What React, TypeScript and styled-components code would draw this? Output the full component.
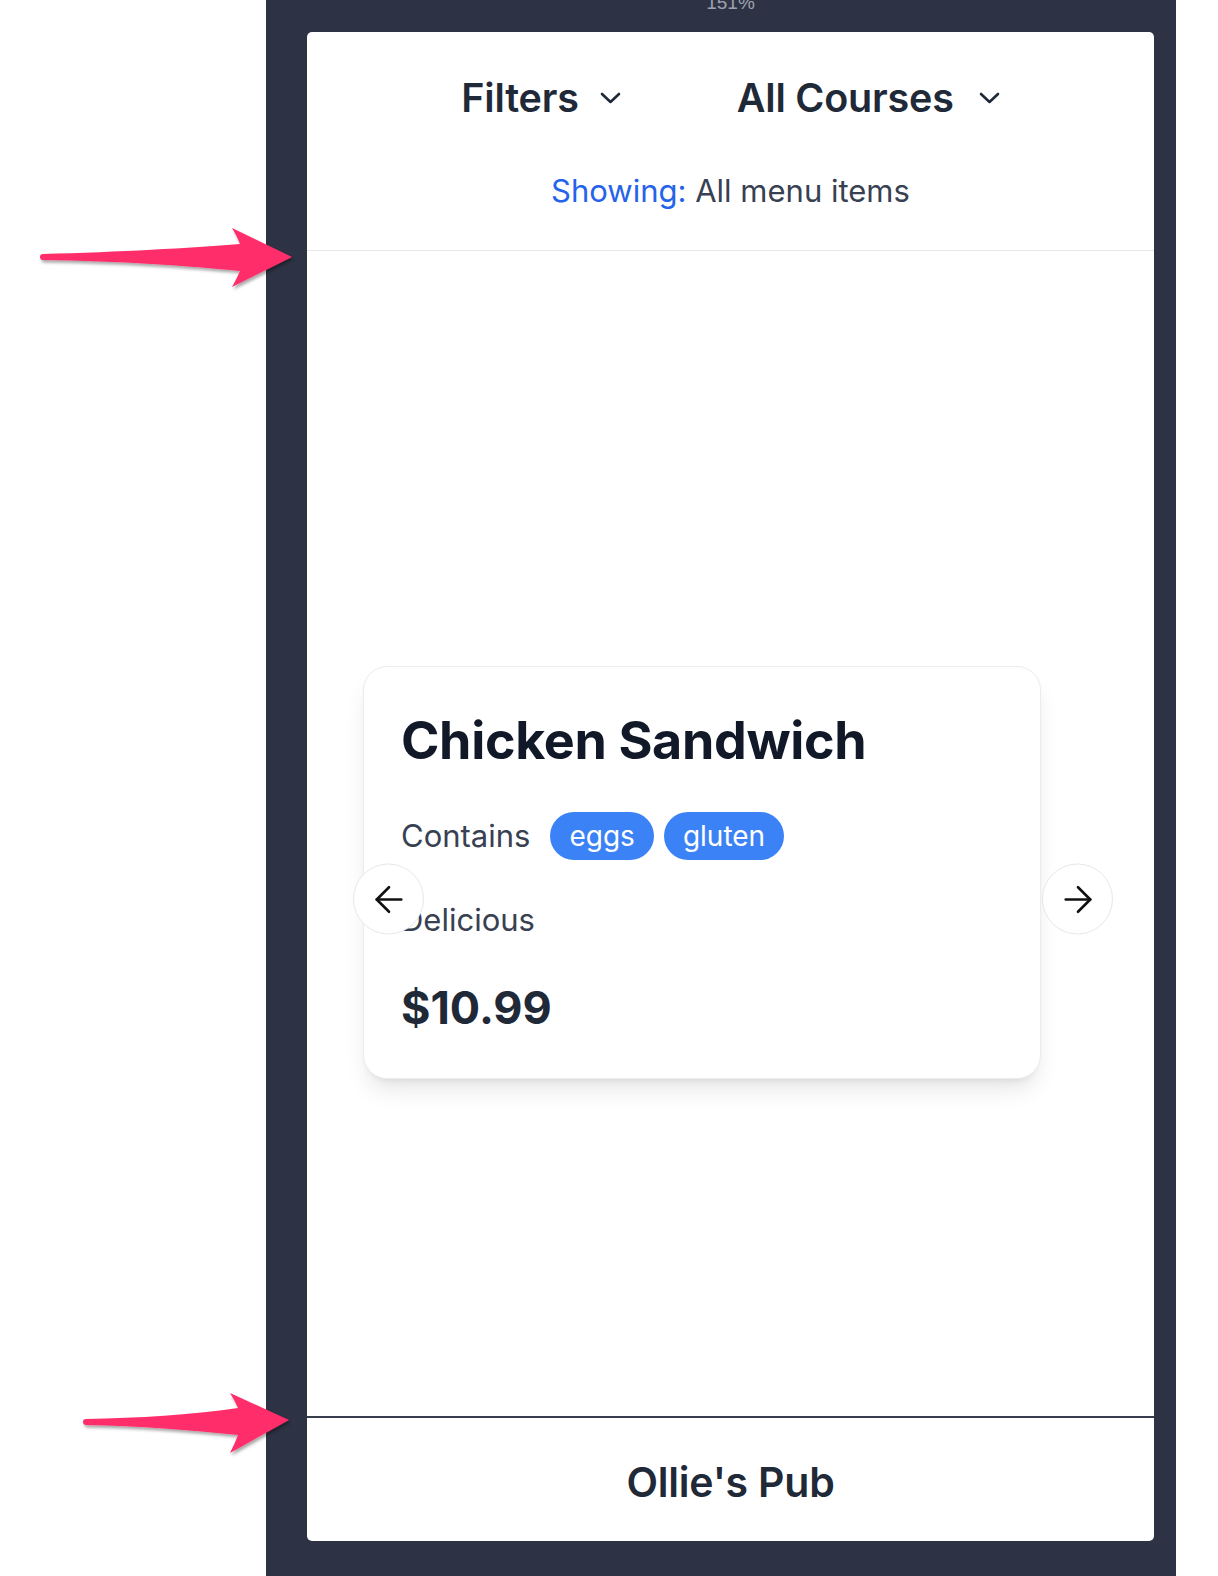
import React from "react";
import styled, { createGlobalStyle } from "styled-components";
import { ArrowLeft, ArrowRight } from "lucide-react";

const GlobalStyle = createGlobalStyle`
  html, body { margin: 0; padding: 0; background: #ffffff; }
  body { font-family: Inter, "Noto Sans", sans-serif; -webkit-font-smoothing: antialiased; }
  * { box-sizing: border-box; }
`;

const Page = styled.div`
  position: relative;
  width: 1218px;
  height: 1576px;
  overflow: hidden;
  display: flex;
  padding-left: 266px;
  background: #ffffff;
`;

const Frame = styled.div`
  width: 910px;
  height: 100%;
  background: #2d3244;
  display: flex;
  flex-direction: column;
  padding: 0 22px 35px 41px;
`;

const ZoomLabel = styled.div`
  margin-top: -8px;
  margin-bottom: 18px;
  height: 22px;
  line-height: 22px;
  font-family: "Liberation Sans", Arial, sans-serif;
  font-size: 19px;
  color: #9da2b0;
  text-align: center;
`;

const Panel = styled.div`
  flex: 1;
  background: #ffffff;
  border-radius: 5px;
  display: flex;
  flex-direction: column;
  overflow: hidden;
`;

const Header = styled.header`
  flex: none;
  height: 219px;
  padding-top: 43px;
  display: flex;
  flex-direction: column;
  align-items: center;
  border-bottom: 1px solid #e5e7eb;
`;

const HeaderRow = styled.div`
  display: flex;
  align-items: center;
  gap: 116px;
  height: 46px;
`;

const Dropdown = styled.button<{ $gap: number }>`
  display: flex;
  align-items: center;
  gap: ${(p) => p.$gap}px;
  padding: 0;
  border: none;
  background: none;
  font-family: inherit;
  font-size: 39.5px;
  line-height: 46px;
  font-weight: 600;
  color: #1f2937;
  letter-spacing: -0.2px;
`;

const ShowingLine = styled.div`
  margin-top: 51px;
  font-size: 31px;
  line-height: 38px;
  color: #374151;
`;

const ShowingLabel = styled.span`
  color: #2563eb;
`;

const Main = styled.main`
  flex: 1;
  display: flex;
  flex-direction: column;
  padding-top: 415px;
`;

const Carousel = styled.div`
  position: relative;
  margin: 0 41px 0 46px;
  padding: 0 0 53px 10px;
`;

const Card = styled.article`
  width: 678px;
  border: 1px solid #ececee;
  border-radius: 24px;
  background: #ffffff;
  box-shadow: 0 15px 23px -5px rgba(0, 0, 0, 0.1), 0 6px 9px -6px rgba(0, 0, 0, 0.1);
  padding: 44px 37px 43px;
  display: flex;
  flex-direction: column;
`;

const Title = styled.h2`
  margin: 0;
  font-size: 52px;
  line-height: 60px;
  font-weight: 700;
  color: #111827;
  letter-spacing: -0.35px;
`;

const TagRow = styled.div`
  margin-top: 41px;
  display: flex;
  align-items: center;
  gap: 10px;
  height: 48px;
`;

const ContainsLabel = styled.span`
  font-size: 31px;
  line-height: 40px;
  color: #374151;
  margin-right: 10px;
`;

const Tag = styled.span`
  height: 48px;
  padding: 0 19px;
  border-radius: 24px;
  background: #3b82f6;
  color: #ffffff;
  font-size: 28px;
  line-height: 48px;
`;

const Description = styled.p`
  margin: 40px 0 0;
  font-size: 31px;
  line-height: 40px;
  color: #374151;
`;

const Price = styled.div`
  margin-top: 41px;
  font-size: 45px;
  line-height: 54px;
  font-weight: 700;
  color: #1f2937;
`;

const NavButton = styled.button<{ $side: "left" | "right" }>`
  position: absolute;
  top: 50%;
  ${(p) => p.$side}: 0;
  transform: translateY(-50%);
  width: 71px;
  height: 71px;
  border-radius: 50%;
  border: 1px solid #e5e7eb;
  background: #ffffff;
  display: flex;
  align-items: center;
  justify-content: center;
  padding: 0;
  color: #111111;
`;

const Footer = styled.footer`
  flex: none;
  height: 125px;
  border-top: 2px solid #373d4d;
  padding-top: 5px;
  display: flex;
  align-items: center;
  justify-content: center;
  font-size: 41px;
  font-weight: 600;
  color: #1f2937;
  letter-spacing: -0.2px;
`;

const Annotation = styled.svg<{ $top: number }>`
  position: absolute;
  left: 0;
  top: ${(p) => p.$top}px;
  overflow: visible;
`;

const Chevron = () => (
  <svg width="21" height="12" viewBox="0 0 21 12" fill="none">
    <path d="M2 2 L10.5 10 L19 2" stroke="#1f2937" strokeWidth="2.6" strokeLinecap="round" strokeLinejoin="round" />
  </svg>
);

const PinkArrow = ({ top, d, id }: { top: number; d: string; id: string }) => (
  <Annotation $top={top} width="310" height="90" viewBox="0 0 310 90">
    <defs>
      <filter id={id} x="-10%" y="-30%" width="120%" height="160%">
        <feDropShadow dx="1.5" dy="2.5" stdDeviation="1.6" floodColor="#000" floodOpacity="0.35" />
      </filter>
    </defs>
    <path d={d} fill="#ff2d6b" filter={`url(#${id})`} />
  </Annotation>
);

export default function App() {
  return (
    <>
      <GlobalStyle />
      <Page>
        <Frame>
          <ZoomLabel>151%</ZoomLabel>
          <Panel>
            <Header>
              <HeaderRow>
                <Dropdown $gap={21}>
                  Filters
                  <Chevron />
                </Dropdown>
                <Dropdown $gap={25}>
                  All Courses
                  <Chevron />
                </Dropdown>
              </HeaderRow>
              <ShowingLine>
                <ShowingLabel>Showing:</ShowingLabel> All menu items
              </ShowingLine>
            </Header>
            <Main>
              <Carousel>
                <Card>
                  <Title>Chicken Sandwich</Title>
                  <TagRow>
                    <ContainsLabel>Contains</ContainsLabel>
                    <Tag>eggs</Tag>
                    <Tag>gluten</Tag>
                  </TagRow>
                  <Description>Delicious</Description>
                  <Price>$10.99</Price>
                </Card>
                <NavButton $side="left" aria-label="Previous">
                  <ArrowLeft size={42} strokeWidth={1.5} />
                </NavButton>
                <NavButton $side="right" aria-label="Next">
                  <ArrowRight size={42} strokeWidth={1.5} />
                </NavButton>
              </Carousel>
            </Main>
            <Footer>Ollie's Pub</Footer>
          </Panel>
        </Frame>
        <PinkArrow
          id="shadowA"
          top={215}
          d="M43,39 C120,37 190,33 240,29 Q237,21 232,13 L292,42 L232,72 Q237,63 240,56 C190,51 120,46 43,45 A3,3 0 0 1 43,39 Z"
        />
        <PinkArrow
          id="shadowB"
          top={1380}
          d="M86,39 C140,38 190,35 238,28 Q235,21 230,13 L289,40 L230,73 Q235,63 238,55 C190,50 140,46 86,45 A3,3 0 0 1 86,39 Z"
        />
      </Page>
    </>
  );
}
